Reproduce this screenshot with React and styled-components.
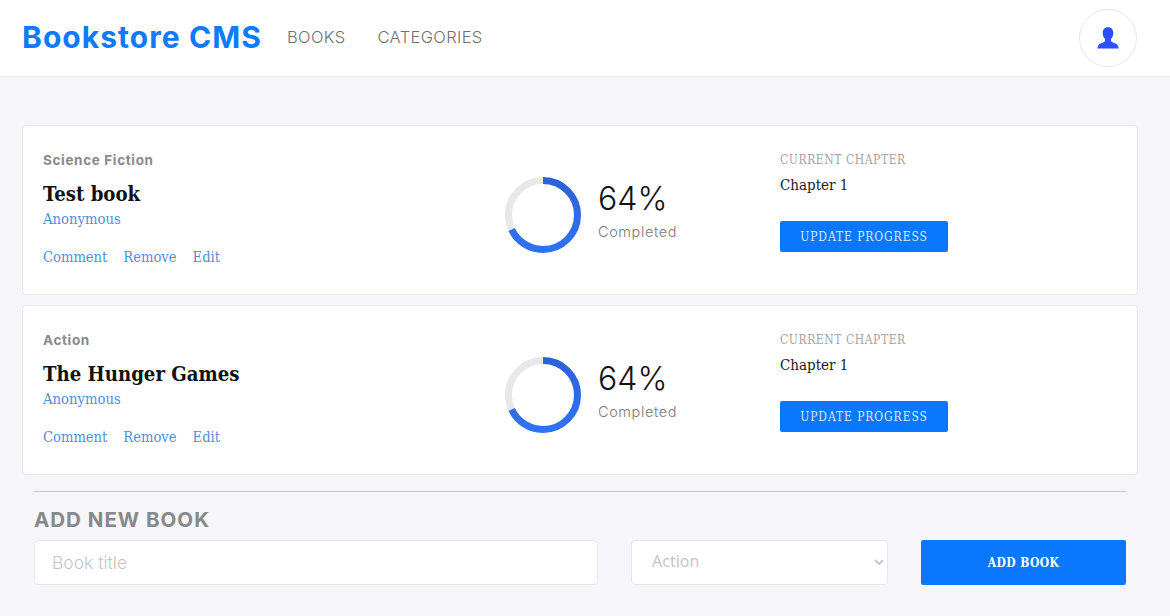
import React from 'react';
import styled, { createGlobalStyle } from 'styled-components';

const sans = '"Inter", "Open Sans", sans-serif';
const slab = '"DejaVu Serif Condensed", "DejaVu Serif", serif';

const GlobalStyle = createGlobalStyle`
  * { box-sizing: border-box; }
  html, body { margin: 0; padding: 0; }
  body { background: #f5f5fa; height: 616px; overflow: hidden; font-family: ${sans}; }
`;

const Header = styled.header`
  display: flex;
  align-items: center;
  height: 77px;
  padding: 0 33px 2px 22px;
  background: #fff;
  border-bottom: 1px solid #e8e8ee;
`;

const Logo = styled.div`
  font-size: 30px;
  font-weight: 700;
  letter-spacing: 1.05px;
  color: #0d7aff;
  width: 265px;
`;

const NavLink = styled.a`
  font-size: 16.5px;
  font-weight: 300;
  letter-spacing: 0.35px;
  color: #6f6f6f;
  margin-right: 32px;
`;

const Avatar = styled.div`
  margin: 2px 0 0 auto;
  width: 58px;
  height: 58px;
  border-radius: 50%;
  border: 1px solid #e8e8e8;
  display: flex;
  align-items: center;
  justify-content: center;
`;

const Main = styled.main`
  padding: 48px 32px 0 22px;
  display: flex;
  flex-direction: column;
  gap: 10px;
`;

const Card = styled.article`
  height: 170px;
  background: #fff;
  border: 1px solid #e8e8e8;
  border-radius: 4px;
  display: grid;
  grid-template-columns: 462px 275px 1fr;
  padding: 0 20px;
`;

const Info = styled.div`
  padding-top: 26px;
`;

const Category = styled.div`
  font-size: 13.5px;
  font-weight: 700;
  letter-spacing: 0.65px;
  line-height: 16px;
  color: #8a8a8a;
`;

const Title = styled.h2`
  margin: 12px 0 0;
  font-family: ${slab};
  font-size: 20.2px;
  font-weight: 700;
  line-height: 28px;
  color: #111;
`;

const Author = styled.div`
  margin-top: 2px;
  font-family: ${slab};
  font-size: 14.7px;
  font-weight: 300;
  line-height: 18px;
  color: #4f8fe0;
`;

const Actions = styled.div`
  display: flex;
  gap: 16px;
  margin-top: 20px;
`;

const ActionLink = styled.a`
  font-family: ${slab};
  font-size: 14.6px;
  line-height: 18px;
  color: #4f8fe0;
`;

const Progress = styled.div`
  display: flex;
  align-items: center;
  gap: 17px;
`;

const RingWrap = styled.div`
  display: flex;
  margin-top: 10px;
`;

const Percent = styled.div`
  font-size: 32px;
  font-weight: 300;
  line-height: 38px;
  color: #121212;
`;

const Completed = styled.div`
  margin-top: 5px;
  font-size: 14.5px;
  font-weight: 300;
  letter-spacing: 0.6px;
  color: #7a7a7a;
`;

const Chapter = styled.div`
  padding-top: 26px;
`;

const ChapterLabel = styled.div`
  font-family: ${slab};
  font-size: 12px;
  letter-spacing: 0.55px;
  line-height: 16px;
  font-weight: 300;
  color: #a3a3a3;
`;

const ChapterName = styled.div`
  margin-top: 7px;
  font-family: ${slab};
  font-size: 15px;
  line-height: 20px;
  color: #1a1a2a;
`;

const UpdateButton = styled.button`
  display: block;
  margin-top: 26px;
  width: 168px;
  height: 31px;
  padding: 0;
  border: 0;
  border-radius: 2px;
  background: #0a77ff;
  color: #d8eaff;
  font-family: ${slab};
  font-size: 12px;
  letter-spacing: 0.9px;
`;

const AddSection = styled.section`
  margin: 16px 44px 0 34px;
  border-top: 1px solid #c4c3cb;
  padding-top: 16px;
`;

const AddHeading = styled.h3`
  margin: 0;
  font-size: 20.5px;
  font-weight: 700;
  letter-spacing: 1px;
  line-height: 24px;
  color: #888;
`;

const AddForm = styled.form`
  margin-top: 8px;
  display: grid;
  grid-template-columns: 564px 257px 205px;
  justify-content: space-between;
  height: 45px;
`;

const TitleInput = styled.input`
  border: 1px solid #e8e8e8;
  border-radius: 4px;
  padding: 0 17px;
  background: #fff;
  font-family: ${sans};
  font-size: 17.5px;
  font-weight: 300;
  &::placeholder { color: #c6c6c6; }
`;

const CategorySelect = styled.select`
  border: 1px solid #e8e8e8;
  border-radius: 4px;
  padding: 0 16px 3px;
  background: #fff;
  font-family: "Noto Sans", sans-serif;
  font-size: 16px;
  color: #c6c6c6;
`;

const AddButton = styled.button`
  border: 0;
  border-radius: 2px;
  background: #0a77ff;
  color: #fff;
  font-family: ${slab};
  font-size: 12px;
  font-weight: 700;
  letter-spacing: 0.4px;
`;

const UserIcon = () => (
  <svg width="22" height="22" viewBox="0 0 22 22" aria-hidden="true">
    <path
      fill="#2a50ff"
      d="M11 0.3c-3.4 0-5.3 2.4-5.3 5.6 0 2.4.9 4.5 2.2 5.9.3.4.3 2.4-.4 3-1.2 1-5.2 1.6-6.3 3.6l-1 3.1h21.6l-1-3.1c-1.1-2-5.1-2.6-6.3-3.6-.7-.6-.7-2.6-.4-3 1.3-1.4 2.2-3.5 2.2-5.9 0-3.2-1.9-5.6-5.3-5.6z"
    />
  </svg>
);

const Ring = ({ percent }) => {
  const radius = 34.5;
  const length = 2 * Math.PI * radius;
  return (
    <svg width="76" height="76" viewBox="0 0 76 76" aria-hidden="true">
      <defs>
        {/* the arc is rotated -90deg, so local x runs bottom to top on screen */}
        <linearGradient id="ringStroke" x1="1" y1="0" x2="0" y2="0">
          <stop offset="0" stopColor="#2e62d4" />
          <stop offset="1" stopColor="#3072f5" />
        </linearGradient>
      </defs>
      <circle cx="38" cy="38" r={radius} fill="none" stroke="#e8e8e8" strokeWidth="7" />
      <circle
        cx="38"
        cy="38"
        r={radius}
        fill="none"
        stroke="url(#ringStroke)"
        strokeWidth="7"
        strokeDasharray={`${(length * percent) / 100} ${length}`}
        transform="rotate(-90 38 38)"
      />
    </svg>
  );
};

const BookCard = ({ category, title }) => (
  <Card>
    <Info>
      <Category>{category}</Category>
      <Title>{title}</Title>
      <Author>Anonymous</Author>
      <Actions>
        <ActionLink>Comment</ActionLink>
        <ActionLink>Remove</ActionLink>
        <ActionLink>Edit</ActionLink>
      </Actions>
    </Info>
    <Progress>
      <RingWrap>
        <Ring percent={68} />
      </RingWrap>
      <div>
        <Percent>64%</Percent>
        <Completed>Completed</Completed>
      </div>
    </Progress>
    <Chapter>
      <ChapterLabel>CURRENT CHAPTER</ChapterLabel>
      <ChapterName>Chapter 1</ChapterName>
      <UpdateButton type="button">UPDATE PROGRESS</UpdateButton>
    </Chapter>
  </Card>
);

const App = () => (
  <>
    <GlobalStyle />
    <Header>
      <Logo>Bookstore CMS</Logo>
      <NavLink>BOOKS</NavLink>
      <NavLink>CATEGORIES</NavLink>
      <Avatar>
        <UserIcon />
      </Avatar>
    </Header>
    <Main>
      <BookCard category="Science Fiction" title="Test book" />
      <BookCard category="Action" title="The Hunger Games" />
    </Main>
    <AddSection>
      <AddHeading>ADD NEW BOOK</AddHeading>
      <AddForm>
        <TitleInput placeholder="Book title" />
        <CategorySelect defaultValue="Action">
          <option>Action</option>
          <option>Science Fiction</option>
        </CategorySelect>
        <AddButton type="button">ADD BOOK</AddButton>
      </AddForm>
    </AddSection>
  </>
);

export default App;
